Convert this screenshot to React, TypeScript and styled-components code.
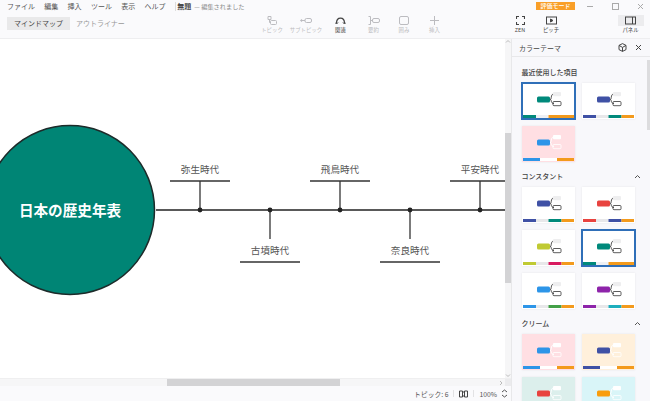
import React from "react";
import styled, { createGlobalStyle } from "styled-components";

const Global = createGlobalStyle`
  html, body { margin: 0; padding: 0; overflow: hidden; background: #fff; }
  * { box-sizing: border-box; }
  body { font-family: "Noto Sans CJK JP", "Noto Sans", sans-serif; }
`;

const Page = styled.div`
  width: 650px; height: 401px; display: flex; flex-direction: column; overflow: hidden;
  color: #444; background: #fff;
`;
const Header = styled.header`
  height: 39px; flex: none; background: #fafafc; border-bottom: 1px solid #eeeef0;
  display: flex; flex-direction: column;
`;
const MenuBar = styled.div`
  height: 12px; display: flex; align-items: center; padding-left: 7px; position: relative;
`;
const MenuItem = styled.span`
  font-size: 7px; line-height: 11px; color: #555; margin-right: 9.3px; white-space: nowrap;
`;
const DocTitle = styled.span`
  font-size: 7px; line-height: 9px; font-weight: 700; color: #444; padding-left: 1.5px; border-left: 1px solid #ddd; white-space: nowrap;
`;
const SavedNote = styled.span`
  font-size: 6.2px; line-height: 11px; color: #888; margin-left: 3px; white-space: nowrap;
`;
const TrialBadge = styled.span`
  margin-left: auto; width: 39px; height: 8px; background: #f99f28; color: #fff; font-size: 6px; line-height: 8px;
  text-align: center; font-weight: 500; white-space: nowrap;
`;
const WindowControls = styled.div`
  display: flex; align-items: center; margin-left: 12px; margin-right: 6px; color: #aaa; gap: 18px;
`;
const ToolRow = styled.div`
  flex: 1; display: flex; align-items: flex-start; padding-left: 7px;
`;
const Tabs = styled.div`
  display: flex; gap: 6px; margin-top: 5px; width: 248px; flex: none;
`;
const Tab = styled.span<{ $active?: boolean }>`
  font-size: 7px; line-height: 13px; height: 13px; padding: 0 ${p => (p.$active ? 7 : 0)}px; white-space: nowrap;
  color: ${p => (p.$active ? "#444" : "#999")};
  background: ${p => (p.$active ? "#e9e9ea" : "transparent")};
`;
const Tool = styled.div<{ $w: number; $faded?: boolean }>`
  width: ${p => p.$w}px; flex: none; display: flex; flex-direction: column; align-items: center;
  color: ${p => (p.$faded ? "#bcbcc0" : "#444")};
  svg { display: block; }
`;
const ToolIcon = styled.div<{ $on?: boolean }>`
  height: 11px; width: 26px; display: flex; align-items: center; justify-content: center;
  background: ${p => (p.$on ? "#ececee" : "transparent")};
`;
const ToolLabel = styled.span`
  font-size: 5.4px; line-height: 8px; white-space: nowrap; margin-top: 0;
`;
const ToolGroup = styled.div<{ $ml: number }>`
  display: flex; flex: none; margin-left: ${p => p.$ml}px; margin-top: 3px;
`;
const Body = styled.div`
  flex: 1; display: flex; min-height: 0;
`;
const Workspace = styled.div`
  width: 511px; flex: none; display: flex; flex-direction: column;
`;
const CanvasRow = styled.div`
  height: 339px; flex: none; display: flex;
`;
const Canvas = styled.main`
  position: relative; width: 505px; height: 339px; overflow: hidden; background: #fff;
  svg { display: block; }
`;
const RootLabel = styled.div`
  position: absolute; left: 0; top: 160px; width: 140px; text-align: center; color: #fff; font-size: 14.6px; line-height: 22px;
  font-weight: 700; white-space: nowrap;
`;
const NodeLabel = styled.div<{ $x: number; $y: number }>`
  position: absolute; left: ${p => p.$x - 30}px; top: ${p => p.$y - 39}px; width: 60px; text-align: center;
  font-size: 9.6px; line-height: 14px; color: #555; white-space: nowrap;
`;
const VTrack = styled.div`
  width: 6px; background: #f6f6f7; display: flex; flex-direction: column; align-items: center; color: #bbb;
  svg { display: block; flex: none; }
`;
const VThumb = styled.div<{ $top: number; $h: number }>`
  margin-top: ${p => p.$top}px; margin-bottom: auto; width: 100%; height: ${p => p.$h}px; background: #d3d3d5;
`;
const HTrack = styled.div`
  height: 8px; flex: none; background: #f6f6f7; display: flex; align-items: stretch; border-top: 1px solid #efeff0; color: #bbb;
  svg { display: block; align-self: center; flex: none; margin-right: 2px; }
`;
const HThumb = styled.div<{ $left: number; $w: number }>`
  margin-left: ${p => p.$left}px; margin-right: auto; width: ${p => p.$w}px; background: #d3d3d5;
`;
const StatusBar = styled.footer`
  flex: 1; display: flex; align-items: center; justify-content: flex-end; padding-right: 3px; background: #fafafc;
  font-size: 6.8px; color: #555;
`;
const StatusItem = styled.span`
  white-space: nowrap; line-height: 10px; display: flex; align-items: center;
`;
const StatusDivider = styled.span`
  width: 1px; height: 7px; background: #e2e2e4; margin: 0 5px;
`;
const Panel = styled.aside`
  width: 139px; flex: none; height: 362px; background: #f8f8fb; border-left: 1px solid #e8e8ea; display: flex; flex-direction: column; position: relative;
`;
const PanelHead = styled.div`
  height: 18px; flex: none; display: flex; align-items: center; padding: 0 8px 0 7px; border-bottom: 1px solid #e8e8ea; color: #444;
`;
const PanelTitle = styled.span`
  font-size: 7px; line-height: 12px; flex: 1; color: #444;
`;
const PanelScroll = styled.div`
  position: absolute; right: 0; top: 21px; width: 3px; height: 70px; background: #dcdcde;
`;
const PanelBody = styled.div`
  flex: 1; overflow: hidden; padding: 9px 0 0 9.5px;
`;
const SectionHead = styled.div`
  display: flex; align-items: center; justify-content: space-between; height: 12px; width: 119px; margin-bottom: 5px;
`;
const SectionTitle = styled.span`
  font-size: 7px; line-height: 12px; color: #444; font-weight: 500;
`;
const Grid = styled.div`
  display: grid; grid-template-columns: 53px 53px; column-gap: 7px; row-gap: 7px; margin-bottom: 8px;
`;
const Thumb = styled.div<{ $bg: string; $selected?: boolean }>`
  width: 53px; height: 36px; position: relative; background: ${p => p.$bg};
  outline: ${p => (p.$selected ? "2px solid #2f6fb8" : "none")}; outline-offset: -1px;
  box-shadow: 0 0 2px rgba(0,0,0,.08);
  svg { display: block; }
`;

type Theme = { bg: string; main: string; strip: [string, number][]; sel?: boolean; cream?: boolean };

const G = "#e8e8ea";
const O = "#f39a1c";
function stripOf(a: string, b: string): [string, number][] {
  return [[a, 13], [G, 12.5], [b, 13], [O, 12.5]];
}
const creamStrip = (a: string): [string, number][] => [[a, 17], ["#fff", 17], [O, 17]];

const recent: Theme[] = [
  { bg: "#fff", main: "#00897b", strip: [["#00897b", 13], ["#eef0f4", 12.5], [O, 25.5]], sel: true },
  { bg: "#fff", main: "#3f51a5", strip: stripOf("#3f51a5", "#00897b") },
  { bg: "#ffdfe3", main: "#2d95e8", strip: creamStrip("#2d95e8"), cream: true },
];
const constant: Theme[] = [
  { bg: "#fff", main: "#3f51a5", strip: stripOf("#3f51a5", "#00897b") },
  { bg: "#fff", main: "#e8433f", strip: stripOf("#e8433f", "#3f51a5") },
  { bg: "#fff", main: "#c0ca33", strip: stripOf("#c0ca33", "#d81b60") },
  { bg: "#fff", main: "#00897b", strip: [["#00897b", 13], ["#eef0f4", 12.5], [O, 25.5]], sel: true },
  { bg: "#fff", main: "#2d95e8", strip: stripOf("#2d95e8", "#43a047") },
  { bg: "#fff", main: "#8e24aa", strip: stripOf("#8e24aa", "#1eaebd") },
];
const cream: Theme[] = [
  { bg: "#ffdfe3", main: "#2d95e8", strip: creamStrip("#2d95e8"), cream: true },
  { bg: "#fff0db", main: "#3f51a5", strip: creamStrip("#3f51a5"), cream: true },
  { bg: "#dcefec", main: "#e8433f", strip: creamStrip("#e8433f"), cream: true },
  { bg: "#d9f5f8", main: "#f99d0c", strip: creamStrip("#f99d0c"), cream: true },
];

function ThemeThumb({ t }: { t: Theme }) {
  let x = 1;
  return (
    <Thumb $bg={t.bg} $selected={t.sel}>
      <svg width="53" height="36" viewBox="0 0 53 36">
        <rect x="15" y="13.5" width="13" height="6" rx="1.5" fill={t.main} />
        <path d="M28 16.5 C29.5 16.5 29 14.5 29.5 13 C30 11.5 30.5 11 32 11 M28 16.5 C29.5 16.5 29 18 29.5 19 C30 20 30.5 20.5 32 20.5" fill="none" stroke={t.cream ? "#fff" : "#444"} strokeWidth="0.9" />
        <rect x="31" y="9" width="8" height="4.2" rx="1" fill={t.cream ? "#fff" : "#eeeeef"} />
        <rect x="31" y="18.5" width="8" height="4.2" rx="1" fill="none" stroke={t.cream ? "#fff" : "#333"} strokeWidth="0.8" />
        {t.strip.map(([c, w], i) => {
          const r = <rect key={i} x={x} y="32" width={w} height="3" fill={c} />;
          x += w;
          return r;
        })}
      </svg>
    </Thumb>
  );
}

const Chevron = () => (
  <svg width="7" height="5" viewBox="0 0 7 5" fill="none" stroke="#555" strokeWidth="1"><path d="M1 4 L3.5 1.5 L6 4" /></svg>
);

const upper: [number, string][] = [[200, "弥生時代"], [340, "飛鳥時代"], [480, "平安時代"]];
const lower: [number, string][] = [[270, "古墳時代"], [410, "奈良時代"]];
const menu = ["ファイル", "編集", "挿入", "ツール", "表示", "ヘルプ"];

const S = { fill: "none", stroke: "currentColor", strokeWidth: 1 };

export default function App() {
  return (
    <Page>
      <Global />
      <Header>
        <MenuBar>
          {menu.map(m => <MenuItem key={m}>{m}</MenuItem>)}
          <DocTitle>無題</DocTitle>
          <SavedNote>— 編集されました</SavedNote>
          <TrialBadge>評価モード</TrialBadge>
          <WindowControls>
            <svg width="7" height="7" viewBox="0 0 7 7" {...S}><path d="M0 3.5H6" /></svg>
            <svg width="7" height="7" viewBox="0 0 7 7" {...S}><rect x=".5" y=".5" width="6" height="6" /></svg>
            <svg width="7" height="7" viewBox="0 0 7 7" {...S}><path d="M1 1L6 6M6 1L1 6" /></svg>
          </WindowControls>
        </MenuBar>
        <ToolRow>
          <Tabs>
            <Tab $active>マインドマップ</Tab>
            <Tab>アウトライナー</Tab>
          </Tabs>
          <ToolGroup $ml={0}>
            <Tool $w={34} $faded>
              <ToolIcon><svg width="10" height="9" viewBox="0 0 10 9" {...S}><path d="M1 .5H4V3.5H1ZM2.5 3.5V6.5H3.5" /><rect x="3.5" y="4.5" width="6" height="4" rx="1" /></svg></ToolIcon>
              <ToolLabel>トピック</ToolLabel>
            </Tool>
            <Tool $w={34} $faded>
              <ToolIcon><svg width="12" height="7" viewBox="0 0 12 7" {...S}><circle cx="1.5" cy="3.5" r=".8" fill="currentColor" /><path d="M2 3.5H5" /><rect x="5" y="1.5" width="6.5" height="4" rx="1.5" /></svg></ToolIcon>
              <ToolLabel>サブトピック</ToolLabel>
            </Tool>
            <Tool $w={35}>
              <ToolIcon><svg width="11" height="8" viewBox="0 0 11 8" fill="none" stroke="currentColor" strokeWidth="1.3"><path d="M1.5 6.5C1.5 3 3.5 1.2 5.5 1.2S9.5 3 9.5 6.5" /><path d="M0 5.5L1.5 7L3 5.5M8 5.5L9.5 7L11 5.5" strokeWidth="1" /></svg></ToolIcon>
              <ToolLabel>関連</ToolLabel>
            </Tool>
            <Tool $w={31} $faded>
              <ToolIcon><svg width="12" height="9" viewBox="0 0 12 9" {...S}><path d="M.5 .5H2.5V8.5H.5M2.5 4.5H4" /><rect x="4.5" y="2.5" width="7" height="4" rx="1.5" /></svg></ToolIcon>
              <ToolLabel>要約</ToolLabel>
            </Tool>
            <Tool $w={30} $faded>
              <ToolIcon><svg width="10" height="9" viewBox="0 0 10 9" {...S}><rect x=".5" y=".5" width="9" height="8" rx="1.5" /></svg></ToolIcon>
              <ToolLabel>囲み</ToolLabel>
            </Tool>
            <Tool $w={31} $faded>
              <ToolIcon><svg width="9" height="9" viewBox="0 0 9 9" {...S}><path d="M4.5 0V9M0 4.5H9" /></svg></ToolIcon>
              <ToolLabel>挿入</ToolLabel>
            </Tool>
          </ToolGroup>
          <ToolGroup $ml={54.5}>
            <Tool $w={31}>
              <ToolIcon><svg width="9" height="9" viewBox="0 0 9 9" fill="none" stroke="currentColor" strokeWidth="1.1"><path d="M.5 3V.5H3M6 .5H8.5V3M8.5 6V8.5H6M3 8.5H.5V6" /></svg></ToolIcon>
              <ToolLabel>ZEN</ToolLabel>
            </Tool>
            <Tool $w={31}>
              <ToolIcon><svg width="11" height="9" viewBox="0 0 11 9" {...S}><rect x=".5" y="1" width="10" height="7" /><path d="M4.5 3L7 4.5L4.5 6Z" fill="currentColor" /></svg></ToolIcon>
              <ToolLabel>ピッチ</ToolLabel>
            </Tool>
          </ToolGroup>
          <ToolGroup $ml={51}>
            <Tool $w={26}>
              <ToolIcon $on><svg width="11" height="9" viewBox="0 0 11 9" {...S}><rect x=".5" y="1" width="10" height="7" /><path d="M7.5 1V8" /></svg></ToolIcon>
              <ToolLabel>パネル</ToolLabel>
            </Tool>
          </ToolGroup>
        </ToolRow>
      </Header>
      <Body>
        <Workspace>
          <CanvasRow>
            <Canvas>
              <svg width="505" height="339" viewBox="0 39 505 339">
                <circle cx="70" cy="210" r="84.5" fill="#008575" stroke="#1d2b2a" strokeWidth="1.5" />
                <path d="M156 210H505" stroke="#222" strokeWidth="1.6" />
                {upper.map(([x]) => (
                  <g key={x}>
                    <path d={`M${x - 30} 181H${x + 30}`} stroke="#333" strokeWidth="1.3" />
                    <path d={`M${x} 181V210`} stroke="#333" strokeWidth="1.3" />
                    <circle cx={x} cy="210" r="2.4" fill="#222" />
                  </g>
                ))}
                {lower.map(([x]) => (
                  <g key={x}>
                    <path d={`M${x - 30} 262H${x + 30}`} stroke="#333" strokeWidth="1.3" />
                    <path d={`M${x} 210V239`} stroke="#333" strokeWidth="1.3" />
                    <circle cx={x} cy="210" r="2.4" fill="#222" />
                  </g>
                ))}
              </svg>
              <RootLabel>日本の歴史年表</RootLabel>
              {upper.map(([x, t]) => <NodeLabel key={t} $x={x} $y={162}>{t}</NodeLabel>)}
              {lower.map(([x, t]) => <NodeLabel key={t} $x={x} $y={243}>{t}</NodeLabel>)}
            </Canvas>
            <VTrack>
              <svg width="6" height="5" viewBox="0 0 6 5" fill="none" stroke="currentColor"><path d="M1 3.5L3 1.5L5 3.5" /></svg>
              <VThumb $top={89} $h={150} />
              <svg width="6" height="5" viewBox="0 0 6 5" fill="none" stroke="currentColor"><path d="M1 1.5L3 3.5L5 1.5" /></svg>
            </VTrack>
          </CanvasRow>
          <HTrack>
            <HThumb $left={167} $w={173} />
            <svg width="4" height="6" viewBox="0 0 4 6" fill="none" stroke="currentColor"><path d="M1 1L3 3L1 5" /></svg>
            <svg width="6" height="7" viewBox="0 0 6 7" style={{ marginRight: 0 }}><rect width="6" height="7" fill="#ebebed" /></svg>
          </HTrack>
          <StatusBar>
            <StatusItem>トピック: 6</StatusItem>
            <StatusDivider />
            <StatusItem>
              <svg width="9" height="8" viewBox="0 0 9 8" fill="none" stroke="#444" strokeWidth="1"><path d="M.5 1H3.5V7H.5ZM5.5 1H8.5V7H5.5ZM3.5 2H5.5M3.5 6H5.5" /></svg>
            </StatusItem>
            <StatusDivider />
            <StatusItem>100%</StatusItem>
            <StatusItem>
              <svg width="7" height="9" viewBox="0 0 7 9" fill="none" stroke="#555" strokeWidth="1" style={{ marginLeft: 4 }}><path d="M1 3L3.5 1L6 3M1 6L3.5 8L6 6" /></svg>
            </StatusItem>
          </StatusBar>
        </Workspace>
        <Panel>
          <PanelHead>
            <PanelTitle>カラーテーマ</PanelTitle>
            <svg width="9" height="9" viewBox="0 0 9 9" fill="none" stroke="#444" strokeWidth="1" style={{ marginRight: 8 }}><path d="M4.5 .6L8 2.4V6.6L4.5 8.4L1 6.6V2.4ZM1 2.4L4.5 4.4L8 2.4M4.5 4.4V8.4" /></svg>
            <svg width="7" height="7" viewBox="0 0 7 7" fill="none" stroke="#444" strokeWidth="1"><path d="M1 1L6 6M6 1L1 6" /></svg>
          </PanelHead>
          <PanelScroll />
          <PanelBody>
            <SectionHead><SectionTitle>最近使用した項目</SectionTitle></SectionHead>
            <Grid>{recent.map((t, i) => <ThemeThumb key={i} t={t} />)}</Grid>
            <SectionHead><SectionTitle>コンスタント</SectionTitle><Chevron /></SectionHead>
            <Grid>{constant.map((t, i) => <ThemeThumb key={i} t={t} />)}</Grid>
            <SectionHead><SectionTitle>クリーム</SectionTitle><Chevron /></SectionHead>
            <Grid>{cream.map((t, i) => <ThemeThumb key={i} t={t} />)}</Grid>
          </PanelBody>
        </Panel>
      </Body>
    </Page>
  );
}
